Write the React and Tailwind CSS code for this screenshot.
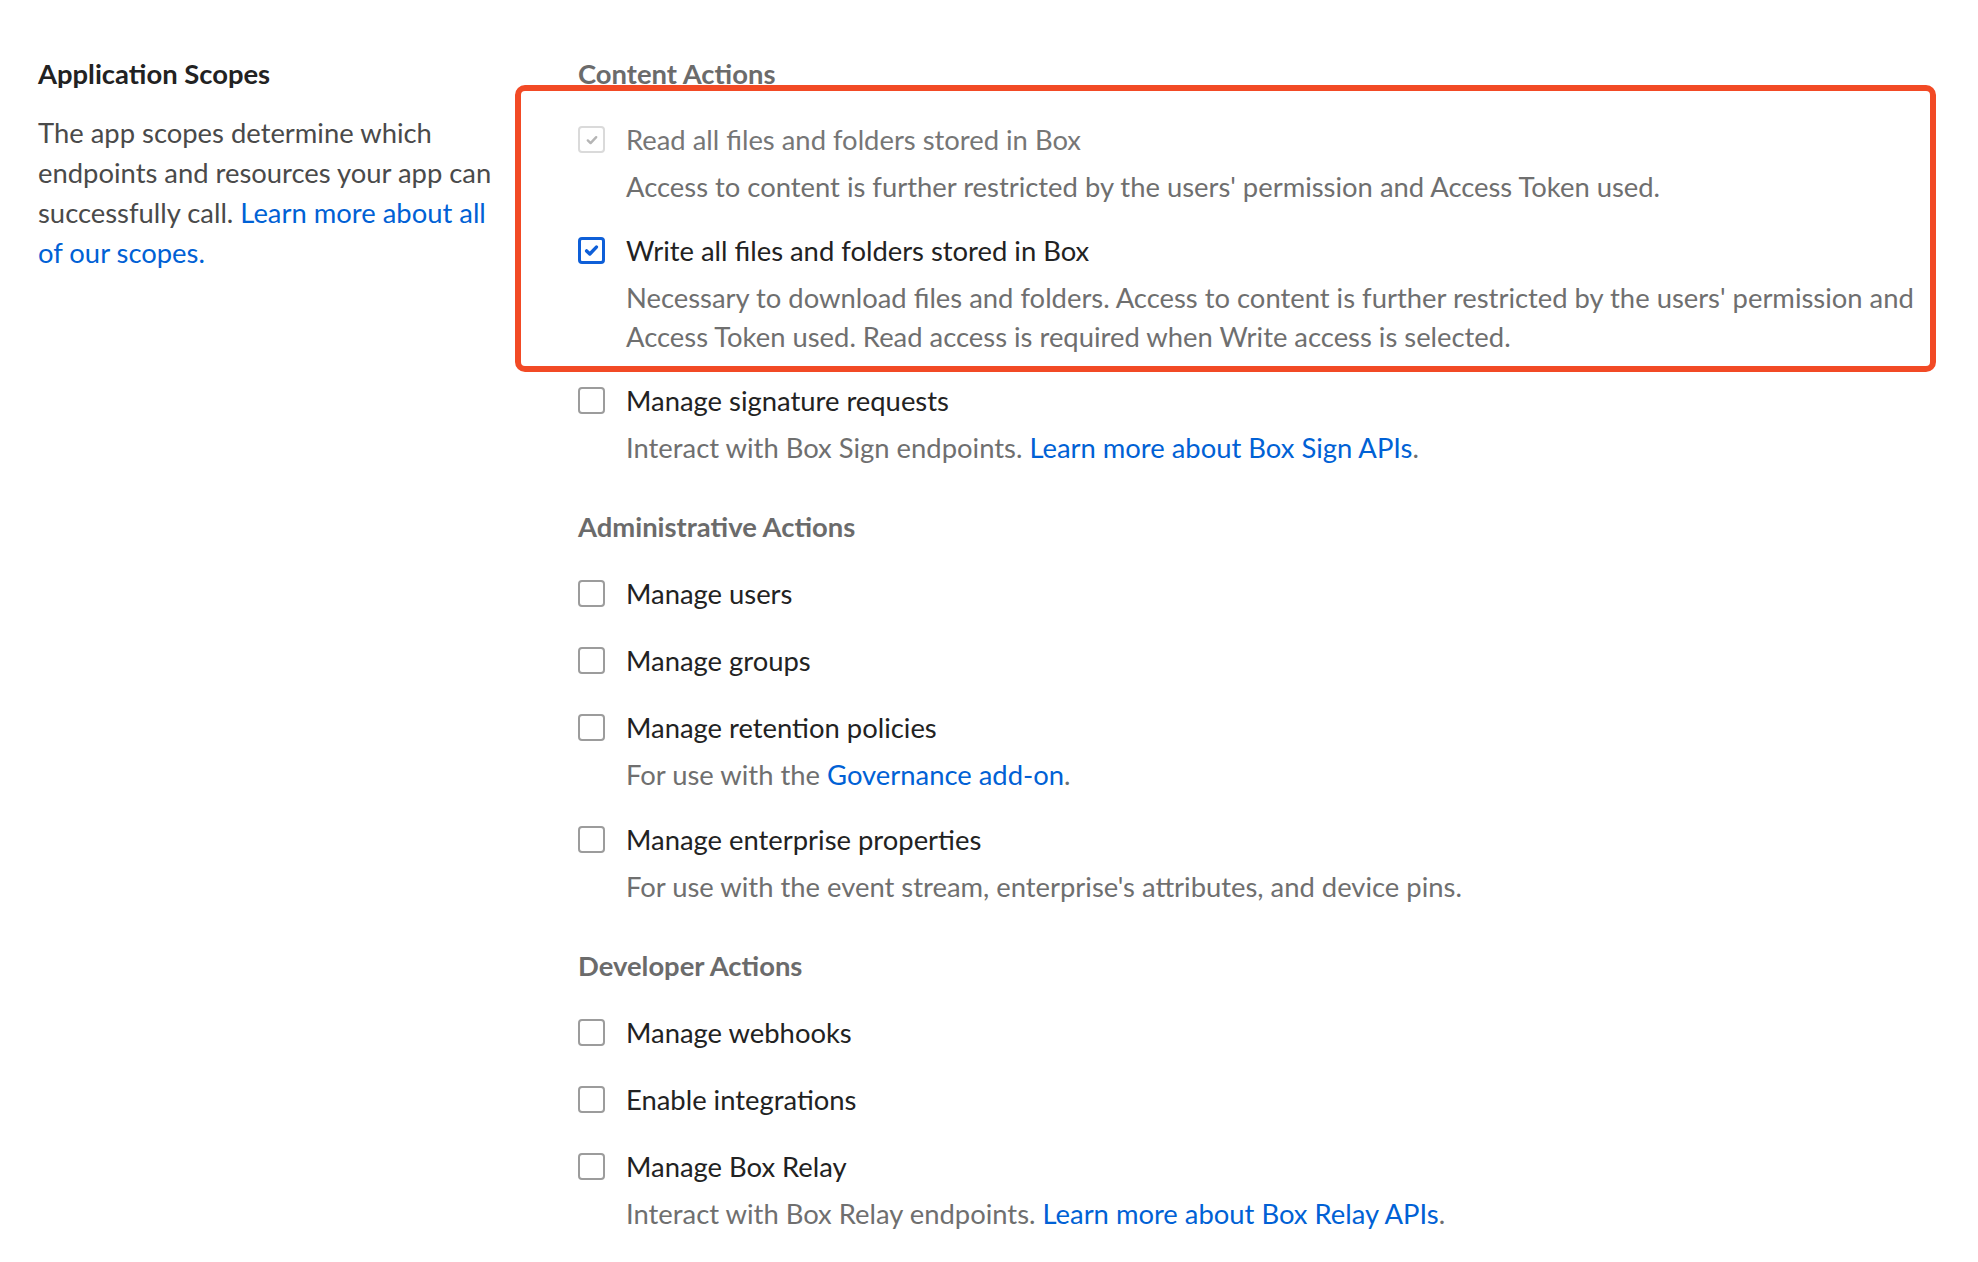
import React from "react";

function Box({ state }) {
  if (state === "disabled") {
    return (
      <span className="w-[27px] h-[27px] shrink-0 rounded-[4px] border-2 border-[#dadada] bg-white flex items-center justify-center">
        <svg viewBox="0 0 16 16" className="w-[16px] h-[16px]" fill="none" stroke="#b5b5b5" strokeWidth="2.4" strokeLinecap="round" strokeLinejoin="round">
          <path d="M3.8 8.4l2.8 2.7L12.2 5.2" />
        </svg>
      </span>
    );
  }
  if (state === "checked") {
    return (
      <span className="w-[27px] h-[27px] shrink-0 rounded-[4px] border-[3px] border-[#0e5fd8] bg-white flex items-center justify-center">
        <svg viewBox="0 0 16 16" className="w-[17px] h-[17px]" fill="none" stroke="#0e5fd8" strokeWidth="3.2" strokeLinecap="round" strokeLinejoin="round">
          <path d="M3.4 8.4l3 2.9L12.6 4.8" />
        </svg>
      </span>
    );
  }
  return <span className="w-[27px] h-[27px] shrink-0 rounded-[4px] border-2 border-[#9c9c9c] bg-white" />;
}

function Item({ label, state = "off", desc, disabled }) {
  return (
    <div>
      <div className="flex items-center gap-[21px] h-[43px]">
        <Box state={state} />
        <span className={disabled ? "text-[#767676] leading-[40px]" : "text-[#222222] leading-[40px]"}>{label}</span>
      </div>
      {desc && <p className="ml-[48px] mt-[6px] leading-[39px] text-[#6f6f6f]">{desc}</p>}
    </div>
  );
}

function Link({ children }) {
  return <a className="text-[#0061d5]">{children}</a>;
}

function Heading({ children }) {
  return <h3 className="leading-[40px] font-bold text-[#6b6b6b]">{children}</h3>;
}

export default function App() {
  return (
    <div className="min-h-screen bg-white font-['Lato','Open_Sans',sans-serif] text-[27.4px] flex pt-[54px] pl-[38px] pr-[44px] pb-[20px]">
      <div className="w-[462px] shrink-0">
        <h2 className="leading-[40px] font-bold text-[#222222]">Application Scopes</h2>
        <p className="mt-[19px] leading-[40px] text-[#4a4a4a]">
          The app scopes determine which endpoints and resources your app can successfully call.{" "}
          <Link>Learn more about all of our scopes.</Link>
        </p>
      </div>
      <div className="ml-[78px] flex-1 flex flex-col">
        <section>
          <Heading>Content Actions</Heading>
          <div className="mt-[24px] flex flex-col gap-[23px]">
            <div className="relative flex flex-col gap-[23px]">
              <span className="pointer-events-none absolute -left-[63px] -right-[2px] -top-[33px] -bottom-[16px] border-[6px] border-[#f24a25] rounded-[10px]" />
              <Item
                label="Read all files and folders stored in Box"
                state="disabled"
                disabled
                desc="Access to content is further restricted by the users' permission and Access Token used."
              />
              <Item
                label="Write all files and folders stored in Box"
                state="checked"
                desc="Necessary to download files and folders. Access to content is further restricted by the users' permission and Access Token used. Read access is required when Write access is selected."
              />
            </div>
            <Item
              label="Manage signature requests"
              desc={
                <>
                  Interact with Box Sign endpoints. <Link>Learn more about Box Sign APIs</Link>.
                </>
              }
            />
          </div>
        </section>
        <section className="mt-[40px]">
          <Heading>Administrative Actions</Heading>
          <div className="mt-[25px] flex flex-col gap-[24px]">
            <Item label="Manage users" />
            <Item label="Manage groups" />
            <Item
              label="Manage retention policies"
              desc={
                <>
                  For use with the <Link>Governance add-on</Link>.
                </>
              }
            />
            <Item
              label="Manage enterprise properties"
              desc="For use with the event stream, enterprise's attributes, and device pins."
            />
          </div>
        </section>
        <section className="mt-[40px]">
          <Heading>Developer Actions</Heading>
          <div className="mt-[25px] flex flex-col gap-[24px]">
            <Item label="Manage webhooks" />
            <Item label="Enable integrations" />
            <Item
              label="Manage Box Relay"
              desc={
                <>
                  Interact with Box Relay endpoints. <Link>Learn more about Box Relay APIs</Link>.
                </>
              }
            />
          </div>
        </section>
      </div>
    </div>
  );
}
